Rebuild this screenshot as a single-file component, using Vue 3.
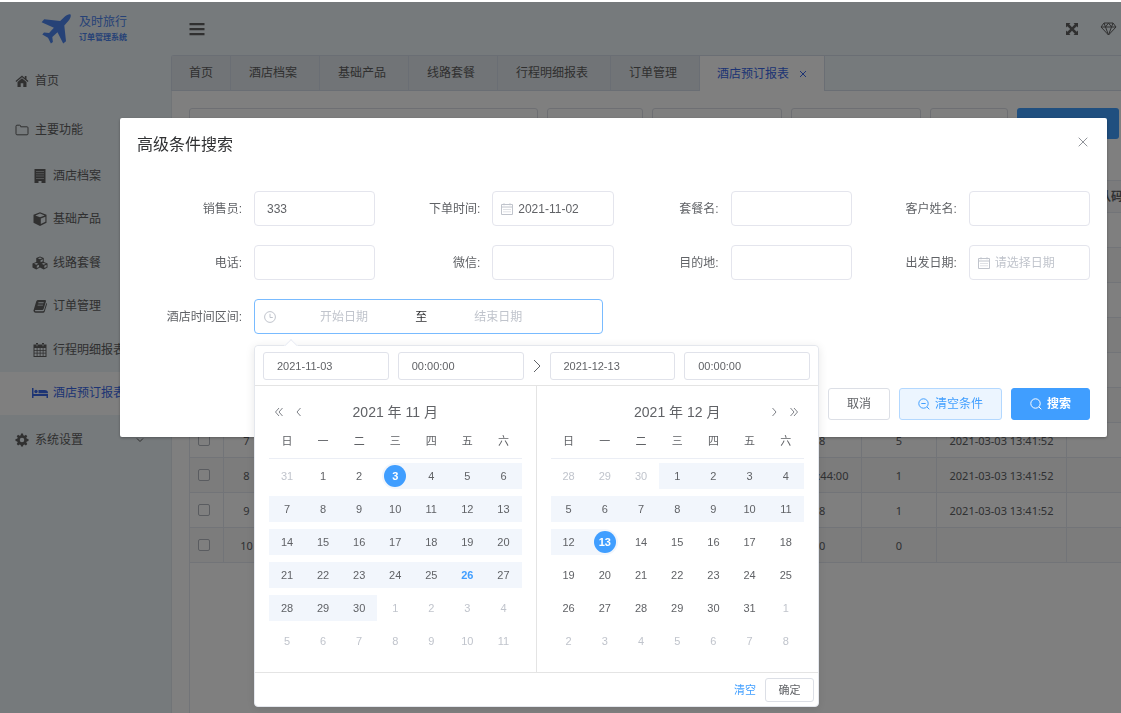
<script setup>
import { ref } from 'vue'

const menu = [
  { icon: 'building', label: '酒店档案' },
  { icon: 'cube', label: '基础产品' },
  { icon: 'cubes', label: '线路套餐' },
  { icon: 'book', label: '订单管理' },
  { icon: 'calendar', label: '行程明细报表' },
  { icon: 'bed', label: '酒店预订报表', active: true },
]
const tabs = ['首页', '酒店档案', '基础产品', '线路套餐', '行程明细报表', '订单管理', '酒店预订报表']

const created = '2021-03-03 13:41:52'
const rows = [
  { start: '', count: '', created: '' },
  { start: '', count: '', created: '' },
  { start: '', count: '', created: '' },
  { start: '', count: '', created: '' },
  { start: '', count: '', created: '' },
  { start: '', count: '', created: '' },
  { start: '2021-03-08', count: '5', created },
  { start: '2021-03-03 11:44:00', count: '1', created },
  { start: '2021-03-08', count: '1', created },
  { start: '2021-03-30', count: '0', created: '' },
]

const seller = ref('333')
const orderDate = ref('2021-11-02')
const startDate = ref('2021-11-03')
const startTime = ref('00:00:00')
const endDate = ref('2021-12-13')
const endTime = ref('00:00:00')

const weekdays = ['日', '一', '二', '三', '四', '五', '六']

function buildMonth(lead, prevLast, length, from, to, opts) {
  const cells = []
  for (let i = 0; i < 42; i++) {
    const n = i - lead + 1
    if (n < 1) cells.push({ day: prevLast + n, cls: 'other' })
    else if (n > length) cells.push({ day: n - length, cls: 'other' })
    else {
      cells.push({
        day: n,
        cls: {
          ranged: n >= from && n <= to,
          start: n === opts.start,
          end: n === opts.end,
          today: n === opts.today,
        },
      })
    }
  }
  return Array.from({ length: 6 }, (_, w) => cells.slice(w * 7, w * 7 + 7))
}

const months = [
  { title: '2021 年 11 月', side: 'left', weeks: buildMonth(1, 31, 30, 3, 30, { start: 3, today: 26 }) },
  { title: '2021 年 12 月', side: 'right', weeks: buildMonth(3, 30, 31, 1, 13, { end: 13 }) },
]
</script>

<template>
  <div class="page">
    <aside class="sidebar">
      <div class="logo">
        <svg class="plane" viewBox="0 0 30 30" aria-hidden="true">
          <path d="M29.5.6c.8 1.2-.3 4.300-2.200 6.400l-4 4.500 1.700 15.800-2.800 2.200-5.700-11.300-5.200 4.700.6 5-2 1.600-2.900-5.800L1.300 20.500l1.700-2 5.100.5 4.800-5.200L.6 8.200l2.600-2.900 16 1.700L23.600 2.800C25.600.9 28.600-.2 29.500.6z" />
        </svg>
        <div class="brand"><strong>及时旅行</strong><span>订单管理系统</span></div>
      </div>
      <nav>
        <a href="#" class="top-item">
          <svg viewBox="0 0 14 14"><path d="M7 1.500.5 7l.8.9L7 3.200l5.700 4.700.8-.9-2-1.700V2H9.800v1.900zM7 4.200 2.500 7.900V13H5.700V9.300h2.600V13h3.200V7.900z" /></svg>首页
        </a>
        <a href="#" class="top-item">
          <svg viewBox="0 0 14 14" class="line"><path d="M1 3.200q0-1 1-1h2.600q1 0 1 1v.6H12q1 0 1 1v6q0 1-1 1H2q-1 0-1-1z" /></svg>主要功能
        </a>
        <div class="submenu">
          <a v-for="m in menu" :key="m.label" href="#" class="sub-item" :class="{ active: m.active }">
            <svg v-if="m.icon === 'building'" viewBox="0 0 16 14"><path fill-rule="evenodd" d="M2.500 0h11v14h-4v-2h-3v2h-4zM4.500 2v1h1V2zm2 0v1h1V2zm2 0v1h1V2zm2 0v1h1V2zm-6 2.300v1h1v-1zm2 0v1h1v-1zm2 0v1h1v-1zm2 0v1h1v-1zm-6 2.300v1h1v-1zm2 0v1h1v-1zm2 0v1h1v-1zm2 0v1h1v-1zm-6 2.300v1h1v-1zm2 0v1h1v-1zm2 0v1h1v-1zm2 0v1h1v-1z" /></svg>
            <svg v-else-if="m.icon === 'cube'" viewBox="0 0 16 14"><path fill-rule="evenodd" d="M8 .3 14.500 2.800v8L8 13.900 1.500 10.800v-8zM8 1.600 3.300 3.400 8 5.200l4.700-1.800zM8.800 6.600v5.400l4.600-2.200V4.700z" /></svg>
            <svg v-else-if="m.icon === 'cubes'" viewBox="0 0 17 14"><path fill-rule="evenodd" d="M8.500 0l4 1.600v4.300l4 1.700v4.200l-4 2-4-1.900-4 1.900-4-2V7.600l4-1.700V1.600zM8.500 1.100 6.200 2l2.300.9 2.300-.9zM9.100 4v2.200l2.400-1V3zM4.500 7l-2.300.9 2.300.9 2.300-.9zM5.100 9.900v2.500l2.400-1.200V8.900zM12.500 7l-2.300.9 2.300.9 2.300-.9zM13.100 9.900v2.500l2.400-1.200V8.900z" /></svg>
            <svg v-else-if="m.icon === 'book'" viewBox="0 0 16 14"><path fill-rule="evenodd" d="M5.700 1h7.500q1.100.2.800 1.300l-2.300 7.500q-.4 1.200-1.500 1.200H3.500q-.8.100-.5.700.2.500 1 .5h7q.7 0 1-.8L14.300 4q.9.500.6 1.400l-2.200 7.100q-.4 1.300-1.600 1.300H3.600Q1.800 13.700 1.500 12q-.2-.7.300-1.600L4.200 2.500Q4.700 1 5.700 1zM6.500 3.300l-.3.900h5.300l.3-.9zM5.800 5.700l-.3.900h5.300l.3-.9z" /></svg>
            <svg v-else-if="m.icon === 'calendar'" viewBox="0 0 16 14"><path fill-rule="evenodd" d="M4 0h2v1.500h4V0h2v1.500h2.500V14h-13V1.500H4zM2.500 5v1.900h2.200V5zm3 0v1.900h2.200V5zm3 0v1.900h2.200V5zm3 0v1.900h2V5zm-9 2.700v2h2.200v-2zm3 0v2h2.200v-2zm3 0v2h2.200v-2zm3 0v2h2v-2zm-9 2.800V13h2.200v-2.500zm3 0V13h2.200v-2.500zm3 0V13h2.200v-2.500zm3 0V13h2v-2.500zM4.600 1v2.300h.8V1zm6 0v2.300h.8V1z" /></svg>
            <svg v-else viewBox="0 0 16 14"><path d="M0 2h1.500v6H16v4h-1.500v-2h-13v2H0z" /><circle cx="4" cy="5.500" r="1.700" /><path d="M6.500 4h6Q16 4 16 7.300H6.500z" /></svg>{{ m.label }}
          </a>
        </div>
        <a href="#" class="top-item">
          <svg viewBox="0 0 14 14"><path fill-rule="evenodd" d="M6 .6h2l.3 1.700 1.200.5 1.400-1 1.400 1.400-1 1.400.5 1.200 1.700.3v2l-1.700.3-.5 1.200 1 1.400-1.400 1.400-1.400-1-1.200.5L8 13.500H6l-.3-1.600-1.200-.5-1.400 1L1.700 11l1-1.400-.5-1.200L.5 8.100v-2l1.700-.3.500-1.200-1-1.400 1.400-1.400 1.400 1 1.200-.5zM7 4.800a2.200 2.200 0 1 0 0 4.500 2.200 2.200 0 0 0 0-4.500z" /></svg>系统设置
          <svg class="caret" viewBox="0 0 8 8"><path d="M1 2.500l3 3 3-3" /></svg>
        </a>
      </nav>
    </aside>

    <div class="main">
      <header class="topbar">
        <button class="plain" aria-label="折叠菜单"><svg class="bars" viewBox="0 0 16 14"><path d="M.5 1h15v2.300H.5zM.5 6h15v2.300H.5zM.5 11h15v2.300H.5z" /></svg></button>
        <div class="tools">
          <button class="plain" aria-label="全屏"><svg class="expand" viewBox="0 0 14 14"><path d="M1 1h4.500L4.200 2.300 7 5.200l2.800-2.900L8.500 1H13v4.500l-1.300-1.300L8.800 7l2.900 2.800L13 8.500V13H8.500l1.300-1.300L7 8.800l-2.800 2.900L5.500 13H1V8.500l1.300 1.300L5.200 7 2.300 4.200 1 5.500z" /></svg></button>
          <button class="plain" aria-label="主题"><svg class="gem" viewBox="0 0 17 14"><path d="M4 1h9l3 4-7.500 8L1 5zM1 5h15M5.500 5l3 8 3-8-3-4zM4 1l1.500 4M13 1l-1.500 4" /></svg></button>
        </div>
      </header>
      <nav class="tabs">
        <a v-for="(t, i) in tabs" :key="t" href="#" :class="{ current: i === 6 }">{{ t }}<svg v-if="i === 6" class="tab-x" viewBox="0 0 8 8"><path d="M1 1l6 6M7 1L1 7" /></svg></a>
      </nav>
      <main class="content">
        <div class="filters">
          <input class="f1" aria-label="关键字" /><input class="f2" aria-label="类型" /><input class="f3" aria-label="开始" /><input class="f3" aria-label="结束" /><input class="f4" aria-label="状态" />
          <button class="f5" aria-label="高级搜索"></button>
        </div>
        <div class="table-wrap">
          <table class="report">
            <colgroup><col class="c-check" /><col class="c-no" /><col class="c-gap" /><col class="c-date" /><col class="c-count" /><col class="c-date" /><col class="c-code" /></colgroup>
            <thead><tr><th></th><th></th><th></th><th></th><th></th><th></th><th>确认码</th></tr></thead>
            <tbody>
              <tr v-for="(r, i) in rows" :key="i">
                <td><input type="checkbox" :aria-label="'选择第' + (i + 1) + '行'" /></td>
                <td>{{ i + 1 }}</td><td></td><td>{{ r.start }}</td><td>{{ r.count }}</td><td>{{ r.created }}</td><td></td>
              </tr>
            </tbody>
          </table>
        </div>
      </main>
    </div>

    <div class="mask">
      <section class="dialog" role="dialog" aria-labelledby="dlg-title">
        <div class="dialog-head">
          <h2 id="dlg-title">高级条件搜索</h2>
          <button class="plain" aria-label="关闭"><svg class="close" viewBox="0 0 10 10"><path d="M.7.700l8.600 8.600M9.300.700L.7 9.300" /></svg></button>
        </div>
        <form class="form" @submit.prevent>
          <div class="item"><label for="seller">销售员:</label><div class="box"><input id="seller" v-model="seller" /></div></div>
          <div class="item"><label for="odate">下单时间:</label>
            <div class="box dated"><svg class="cal" viewBox="0 0 12 12"><path d="M.5 1.500h11v10H.5zM.5 4h11M3 .3v2M9 .3v2" /><path class="dots" d="M2.500 6.500h7M2.500 8.800h7" /></svg><input id="odate" v-model="orderDate" /></div>
          </div>
          <div class="item"><label for="pkg">套餐名:</label><div class="box"><input id="pkg" /></div></div>
          <div class="item"><label for="cust">客户姓名:</label><div class="box"><input id="cust" /></div></div>
          <div class="item"><label for="tel">电话:</label><div class="box"><input id="tel" /></div></div>
          <div class="item"><label for="wx">微信:</label><div class="box"><input id="wx" /></div></div>
          <div class="item"><label for="dest">目的地:</label><div class="box"><input id="dest" /></div></div>
          <div class="item"><label for="depart">出发日期:</label>
            <div class="box dated"><svg class="cal" viewBox="0 0 12 12"><path d="M.5 1.500h11v10H.5zM.5 4h11M3 .3v2M9 .3v2" /><path class="dots" d="M2.500 6.500h7M2.500 8.800h7" /></svg><input id="depart" placeholder="请选择日期" /></div>
          </div>
          <div class="item wide"><label for="rstart">酒店时间区间:</label>
            <div class="box range">
              <svg class="clock" viewBox="0 0 12 12"><circle cx="6" cy="6" r="5.400" /><path d="M6 2.800V6.500h2.800" /></svg>
              <input id="rstart" placeholder="开始日期" /><span>至</span><input aria-label="结束日期" placeholder="结束日期" />
              <div class="picker">
                <div class="picker-head">
                  <div class="pair"><input v-model="startDate" aria-label="开始日期" /><input v-model="startTime" aria-label="开始时间" /></div>
                  <svg class="to" viewBox="0 0 8 14"><path d="M1 1l6 6-6 6" /></svg>
                  <div class="pair"><input v-model="endDate" aria-label="结束日期" /><input v-model="endTime" aria-label="结束时间" /></div>
                </div>
                <div class="panels">
                  <div v-for="m in months" :key="m.title" class="panel">
                    <div class="panel-head" :class="m.side">
                      <button class="plain" aria-label="年"><svg viewBox="0 0 10 10"><path d="M5 1L1.500 5 5 9M8.500 1L5 5l3.500 4" /></svg></button>
                      <button class="plain" aria-label="月"><svg viewBox="0 0 10 10"><path d="M6.500 1L3 5l3.500 4" /></svg></button>
                      <span>{{ m.title }}</span>
                    </div>
                    <table class="days">
                      <thead><tr><th v-for="w in weekdays" :key="w">{{ w }}</th></tr></thead>
                      <tbody>
                        <tr v-for="(week, wi) in m.weeks" :key="wi">
                          <td v-for="(d, di) in week" :key="di" :class="d.cls"><button class="day"><span>{{ d.day }}</span></button></td>
                        </tr>
                      </tbody>
                    </table>
                  </div>
                </div>
                <div class="picker-foot"><button class="link">清空</button><button class="ok">确定</button></div>
              </div>
            </div>
          </div>
        </form>
        <div class="actions">
          <button class="btn">取消</button>
          <button class="btn soft"><svg viewBox="0 0 12 12"><circle cx="5.500" cy="5.500" r="4.700" /><path d="M9 9l2.300 2.300M3.300 5.500h4.400" /></svg>清空条件</button>
          <button class="btn primary"><svg viewBox="0 0 12 12"><circle cx="5.500" cy="5.500" r="4.700" /><path d="M9 9l2.300 2.300" /></svg>搜索</button>
        </div>
      </section>
    </div>
  </div>
</template>

<style>
body { background: #fff; overflow: hidden; }
</style>

<style scoped>
* { box-sizing: border-box; }
.page {
  display: flex; height: 100vh; padding-top: 2px; overflow: hidden;
  font: 12px/18px "Liberation Sans", "Noto Sans CJK SC", sans-serif; color: #606266;
}
a { color: inherit; text-decoration: none; }
button, input { font: inherit; color: inherit; }
button { cursor: pointer; padding: 0; }
input { outline: none; min-width: 0; }
svg { display: block; fill: currentColor; flex: none; }
.plain { border: 0; background: none; }

.sidebar { width: 171px; flex: none; background: #ecf4f9; color: #606060; }
.logo { display: flex; align-items: center; gap: 8px; height: 54px; padding-left: 41px; color: #4c84ee; }
.plane { width: 30px; height: 30px; }
.brand { display: flex; flex-direction: column; }
.brand strong { font-size: 12px; line-height: 18px; font-weight: 400; }
.brand span { font-size: 8px; line-height: 14px; font-weight: 700; }
.top-item { display: flex; align-items: center; gap: 6px; height: 49px; padding-left: 15px; }
.top-item svg { width: 14px; height: 14px; }
.top-item .line { fill: none; stroke: currentColor; stroke-width: 1; }
.top-item .caret { width: 8px; height: 8px; margin-left: auto; margin-right: 27px; fill: none; stroke: currentColor; }
.submenu { display: grid; grid-auto-rows: 1fr; height: 261px; }
.sub-item { display: flex; align-items: center; gap: 5px; padding-left: 32px; white-space: nowrap; overflow: hidden; }
.sub-item svg { width: 16px; height: 14px; }
.sub-item.active { background: #fff; color: #3a68e8; }

.main { flex: 1; min-width: 0; display: flex; flex-direction: column; background: #ecf4f9; }
.topbar { display: flex; justify-content: space-between; align-items: center; height: 53px; padding: 1px 4px 0 18px; flex: none; color: #606060; }
.bars { width: 16px; height: 14px; }
.tools { display: flex; gap: 21px; align-items: center; }
.expand { width: 14px; height: 14px; }
.gem { width: 17px; height: 14px; fill: none; stroke: currentColor; }
.tabs { display: flex; height: 36px; flex: none; border: 1px solid #d5dde8; border-right: 0; border-top-left-radius: 3px; color: #606060; }
.tabs a { display: flex; align-items: center; padding: 0 22px 0 18px; border-right: 1px solid #d5dde8; background: #e3e9ee; white-space: nowrap; height: 34px; }
.tabs a:first-child { padding: 0 17px; }
.tabs .current { background: #fff; color: #3a68e8; height: 35px; padding: 0 17px; }
.tab-x { width: 8px; height: 8px; margin-left: 10px; fill: none; stroke: currentColor; }
.content { flex: 1; min-height: 0; background: #fff; border-left: 1px solid #e2e8ee; padding: 17px 0 0 17px; display: flex; flex-direction: column; overflow: hidden; }
.filters { display: flex; gap: 9px; }
.filters input { height: 31px; border: 1px solid #dcdfe6; border-radius: 3px; }
.filters input, .filters button { flex: none; }
.f1 { width: 349px; } .f2 { width: 96px; } .f3 { width: 130px; } .f4 { width: 78px; }
.f5 { width: 102px; height: 31px; border: 0; border-radius: 3px; background: #409eff; }
.table-wrap { flex: 1; margin-top: 41px; border-top: 1px solid #e4e8f0; border-left: 1px solid #e4e8f0; overflow: hidden; }
.report { border-collapse: separate; border-spacing: 0; table-layout: fixed; width: 954px; font: 11px/16px "Noto Sans", "Noto Sans CJK SC", sans-serif; text-align: center; }
.c-check { width: 34px; } .c-no { width: 46px; } .c-gap { width: 462px; } .c-date { width: 130px; } .c-count { width: 75px; } .c-code { width: 77px; }
.report th, .report td { padding: 0; border-right: 1px solid #e4e8f0; border-bottom: 1px solid #e4e8f0; white-space: nowrap; }
.report th { height: 32px; background: #f6f7f9; font-size: 12px; font-weight: 700; }
.report td { height: 35px; padding-top: 1px; }
.report tbody tr:nth-child(even) { background: #f8f8f8; }
.report input { appearance: none; display: block; width: 12px; height: 12px; margin: 0 auto 2px 8px; border: 1px solid #b4b8c0; border-radius: 2px; background: #fff; }

.mask { position: fixed; inset: 2px 0 0; background: rgba(0, 0, 0, .5); padding: 116px 14px 0 120px; }
.dialog { background: #fff; border-radius: 2px; padding: 16px 17px 17px; box-shadow: 0 1px 3px rgba(0, 0, 0, .3); }
.dialog-head { display: flex; justify-content: space-between; align-items: flex-start; }
.dialog-head h2 { margin: 0; font-size: 16px; line-height: 22px; font-weight: 400; color: #303133; }
.dialog-head .plain { padding: 3px 2px; color: #909399; }
.close { width: 10px; height: 10px; fill: none; stroke: currentColor; }
.form { display: grid; grid-template-columns: repeat(4, 1fr); row-gap: 19px; margin-top: 35px; }
.item { display: flex; align-items: center; min-width: 0; }
.item label { width: 117px; flex: none; padding-right: 12px; text-align: right; }
.wide { grid-column: span 2; padding-right: 11px; }
.box { flex: 1; min-width: 0; display: flex; align-items: center; height: 35px; border: 1px solid #e4e5ed; border-radius: 4px; background: #fff; }
.box > input { width: 100%; border: 0; padding: 0 12px; background: none; height: 100%; }
.dated { padding-left: 8px; }
.dated > input { padding: 0 0 0 5px; }
.cal, .clock { width: 12px; height: 12px; fill: none; stroke: #c0c4cc; }
.cal .dots { stroke-dasharray: 1 1; }
input::placeholder { color: #c0c4cc; opacity: 1; }
.range { position: relative; padding: 0 35px 0 9px; border-color: #79bbff; }
.range > span { width: 18px; flex: none; text-align: center; color: #303133; }
.range > input { flex: 1; text-align: center; padding: 0; }

.picker { position: absolute; left: -1px; top: 45px; z-index: 2; width: 565px; background: #fff; border: 1px solid #e4e7ed; border-radius: 4px; box-shadow: 0 2px 10px rgba(0, 0, 0, .1); }
.picker::before { content: ""; position: absolute; left: 31px; top: -5px; width: 9px; height: 9px; background: #fff; border: 1px solid #ebeef5; border-width: 1px 0 0 1px; transform: rotate(45deg); }
.picker-head { position: relative; display: flex; align-items: center; padding: 0 8px; height: 40px; border-bottom: 1px solid #e4e4e4; font-size: 11px; background: #fff; border-radius: 4px 4px 0 0; }
.pair { flex: 1; display: flex; gap: 9px; }
.pair input { flex: 1; width: 0; height: 28px; border: 1px solid #e0e2ea; border-radius: 3px; padding: 0 13px; }
.to { width: 8px; height: 14px; margin: 0 9px; fill: none; stroke: #606266; stroke-width: 1; }
.panels { display: grid; grid-template-columns: 1fr 1fr; }
.panel { padding: 12px 14px 15px; }
.panel:first-child { border-right: 1px solid #e4e4e4; }
.panel-head { position: relative; display: flex; align-items: center; height: 28px; color: #606266; }
.panel-head span { position: absolute; left: 40px; right: 40px; text-align: center; font-size: 14px; line-height: 20px; }
.panel-head .plain { width: 10px; margin: 0 5px; }
.panel-head .plain svg { width: 10px; height: 10px; fill: none; stroke: #808389; }
.panel-head.right { flex-direction: row-reverse; }
.panel-head.right svg { transform: rotate(180deg); }
.days { width: 100%; border-collapse: separate; border-spacing: 0; table-layout: fixed; font-size: 11px; line-height: 16px; text-align: center; }
.days th { height: 33px; padding: 0 0 2px; font-weight: 400; border-bottom: 1px solid #ebeef5; }
.days td { height: 33px; padding: 0; }
.day { display: flex; align-items: center; justify-content: center; width: 100%; height: 26px; border: 0; background: none; }
.day span { width: 22px; line-height: 22px; border-radius: 50%; }
.other { color: #c0c4cc; }
.ranged .day { background: #f2f6fc; }
.start .day { width: calc(100% - 5px); margin-left: 5px; padding-right: 5px; border-radius: 13px 0 0 13px; }
.end .day { width: calc(100% - 5px); padding-left: 5px; border-radius: 0 13px 13px 0; }
.start .day span, .end .day span { background: #409eff; color: #fff; font-weight: 700; }
.today { color: #409eff; font-weight: 700; }
.picker-foot { display: flex; justify-content: flex-end; align-items: center; gap: 9px; height: 34px; padding-right: 4px; border-top: 1px solid #e4e4e4; font-size: 11px; }
.link { border: 0; background: none; color: #409eff; }
.ok { width: 49px; height: 24px; border: 1px solid #dcdfe6; border-radius: 3px; background: #fff; }

.actions { display: flex; justify-content: flex-end; gap: 9px; margin-top: 54px; }
.btn { display: flex; align-items: center; gap: 5px; height: 32px; padding: 0 18px; border: 1px solid #dcdfe6; border-radius: 3px; background: #fff; }
.btn svg { width: 12px; height: 12px; fill: none; stroke: currentColor; }
.soft { color: #409eff; background: #ecf5ff; border-color: #b3d8ff; }
.primary { color: #fff; background: #409eff; border-color: #409eff; font-weight: 700; }
</style>
